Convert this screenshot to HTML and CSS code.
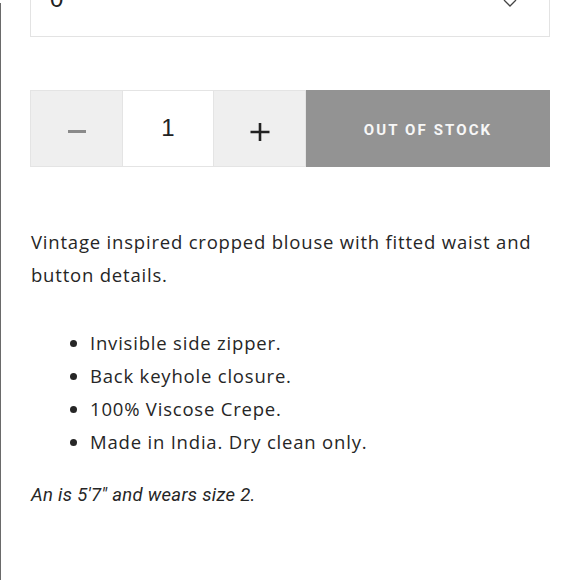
FILE: index.html
```html
<!DOCTYPE html>
<html lang="en">
<head>
<meta charset="utf-8">
<title>Product</title>
<link rel="stylesheet" href="styles.css">
</head>
<body>
<div class="page">
  <div class="content">
    <div class="select">
      <span class="select-value">0</span>
      <svg class="chevron" width="14" height="9" viewBox="0 0 14 9"><path d="M1 1 L7 7 L13 1" fill="none" stroke="#444" stroke-width="1.3"/></svg>
    </div>

    <div class="qty-row">
      <div class="qty-btn minus"><span class="minus-bar"></span></div>
      <div class="qty-input">1</div>
      <div class="qty-btn plus">
        <svg width="20" height="20" viewBox="0 0 20 20"><path d="M10 1 V19 M0.5 10 H19.5" stroke="#222" stroke-width="2.6"/></svg>
      </div>
      <div class="stock-btn">OUT OF STOCK</div>
    </div>

    <div class="description">
      <p class="intro">Vintage inspired cropped blouse with fitted waist and button details.</p>
      <ul class="features">
        <li>Invisible side zipper.</li>
        <li>Back keyhole closure.</li>
        <li>100% Viscose Crepe.</li>
        <li>Made in India. Dry clean only.</li>
      </ul>
      <p class="note"><em>An is 5'7" and wears size 2.</em></p>
    </div>
  </div>
</div>
</body>
</html>
```

FILE: styles.css
```css
html, body {
  margin: 0;
  padding: 0;
  background: #fff;
}

body {
  height: 580px;
  overflow: hidden;
}

.page {
  display: flow-root;
  height: 580px;
  background: linear-gradient(#6a6a6a, #6a6a6a) 0 3px / 1px 100% no-repeat;
}

.content {
  width: 520px;
  padding-left: 30px;
}

.select {
  height: 60px;
  margin-top: -23px;
  border: 1px solid #e3e3e3;
  box-sizing: border-box;
  display: flex;
  align-items: flex-start;
  justify-content: space-between;
  padding: 0 32px 0 19px;
  font-family: "Liberation Sans", Arial, sans-serif;
  font-size: 24px;
  color: #222;
}

.select-value {
  line-height: 28px;
  margin-top: 7px;
}

.chevron {
  margin-top: 21px;
}

.qty-row {
  display: flex;
  height: 77px;
  margin-top: 53px;
}

.qty-btn {
  width: 92px;
  box-sizing: border-box;
  background: #efefef;
  border: 1px solid #e4e4e4;
  display: flex;
  align-items: center;
  justify-content: center;
}

.qty-btn.minus {
  border-right: none;
}

.minus-bar {
  display: block;
  width: 18px;
  height: 3px;
  background: #8a8a8a;
  margin-top: 6px;
}

.qty-btn.plus {
  border-left: none;
}

.qty-btn.plus svg {
  margin-top: 6px;
  margin-left: 1px;
}

.qty-input {
  width: 92px;
  box-sizing: border-box;
  background: #fff;
  border: 1px solid #e4e4e4;
  display: flex;
  align-items: center;
  justify-content: center;
  font-family: "Liberation Sans", Arial, sans-serif;
  font-size: 24px;
  color: #222;
  padding-bottom: 1px;
}

.stock-btn {
  flex: 1;
  background: #939393;
  color: #f7f7f7;
  display: flex;
  align-items: center;
  justify-content: center;
  font-family: Roboto, "Liberation Sans", sans-serif;
  font-weight: 700;
  font-size: 15px;
  letter-spacing: 2.1px;
  padding-top: 3px;
}

.description {
  margin-top: 58px;
  color: #262626;
  font-family: "Open Sans", "Liberation Sans", sans-serif;
  font-size: 18.5px;
  letter-spacing: 0.8px;
  line-height: 33px;
}

.intro {
  margin: 0;
  padding-left: 1px;
}

.features {
  margin: 35px 0 0 0;
  padding-left: 60px;
}

.note {
  margin: 21px 0 0 0;
  padding-left: 1px;
  font-family: Roboto, "Liberation Sans", sans-serif;
  font-size: 18.5px;
  letter-spacing: 0.3px;
}
```
